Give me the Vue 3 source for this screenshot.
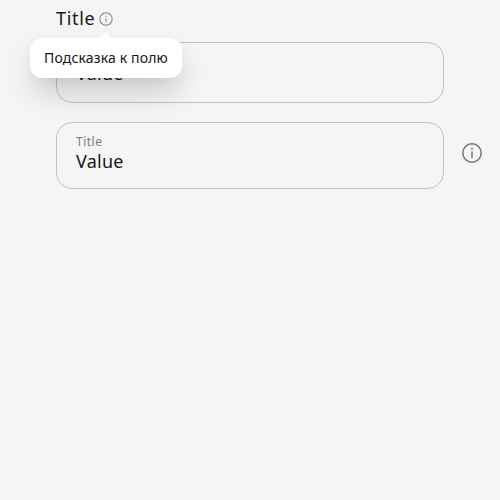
<script setup>
const hint = 'Подсказка к полю'
</script>

<template>
  <main class="form">
    <section class="outer-field">
      <div class="heading">
        <label class="label">Title</label>
        <span class="anchor">
          <svg class="small-icon" viewBox="0 0 14 14" fill="none">
            <circle cx="7" cy="7" r="6.2" stroke="currentColor" stroke-width="1.1" />
            <path d="M7 6V10.3" stroke="currentColor" stroke-width="1.1" />
            <circle cx="7" cy="4.2" r=".7" fill="currentColor" />
          </svg>
          <span class="tooltip" role="tooltip">
            <svg class="arrow" viewBox="0 0 20 6"><path d="M0 6C5 6 6.2 4.2 8.4 1.2Q10 -.8 11.6 1.2C13.8 4.2 15 6 20 6Z" fill="#fff" /></svg>
            <span class="hint">{{ hint }}</span>
          </span>
        </span>
      </div>
      <div class="box single"><span class="value">Value</span></div>
    </section>
    <section class="inner-field">
      <div class="box double">
        <span class="caption">Title</span>
        <span class="value">Value</span>
      </div>
      <svg class="large-icon" viewBox="0 0 20 20" fill="none">
        <circle cx="10" cy="10" r="9.2" stroke="currentColor" stroke-width="1.5" />
        <path d="M10 8.5V15" stroke="currentColor" stroke-width="1.5" />
        <circle cx="10" cy="5.8" r="1" fill="currentColor" />
      </svg>
    </section>
  </main>
</template>

<style>
body {
  background: #f5f5f5;
}
</style>

<style scoped>
.form {
  box-sizing: border-box;
  height: 500px;
  padding: 7px 18px 0 56px;
  overflow: hidden;
  background: #f5f5f5;
  color: #171717;
  font-family: "Noto Sans", sans-serif;
}
.heading {
  display: flex;
  align-items: flex-start;
  height: 22px;
  margin-bottom: 13px;
}
.label {
  width: 43px;
  font-size: 18px;
  line-height: 22px;
  letter-spacing: 0.7px;
}
.anchor {
  position: relative;
  display: flex;
  width: 14px;
  height: 14px;
  margin-top: 5px;
  color: #858585;
}
.small-icon {
  width: 14px;
  height: 14px;
}
.tooltip {
  position: absolute;
  z-index: 1;
  top: 26px;
  left: -69px;
  box-sizing: border-box;
  width: 152px;
  height: 40px;
  padding-left: 14px;
  border-radius: 12px;
  background: #fff;
  color: #171717;
  box-shadow: 0 16px 32px -4px rgba(0, 0, 0, 0.2), 0 4px 14px -4px rgba(0, 0, 0, 0.08);
}
.arrow {
  position: absolute;
  top: -6px;
  left: 66px;
  width: 20px;
  height: 6px;
}
.hint {
  display: block;
  font-size: 14px;
  line-height: 40px;
  letter-spacing: 0.15px;
  white-space: nowrap;
}
.box {
  display: flex;
  flex-direction: column;
  box-sizing: border-box;
  width: 388px;
  padding-left: 19px;
  border: 1px solid #c2c2c2;
  border-radius: 16px;
}
.single {
  height: 61px;
  justify-content: center;
}
.double {
  height: 67px;
  padding-top: 10px;
}
.value {
  font-size: 18px;
  line-height: 22px;
  letter-spacing: 0.25px;
}
.caption {
  color: #7b7b7b;
  font-size: 12px;
  line-height: 17px;
  letter-spacing: 0.5px;
}
.inner-field {
  display: flex;
  align-items: center;
  gap: 18px;
  height: 67px;
  margin-top: 19px;
}
.large-icon {
  width: 20px;
  height: 20px;
  margin-top: -5px;
  color: #747474;
}
</style>
